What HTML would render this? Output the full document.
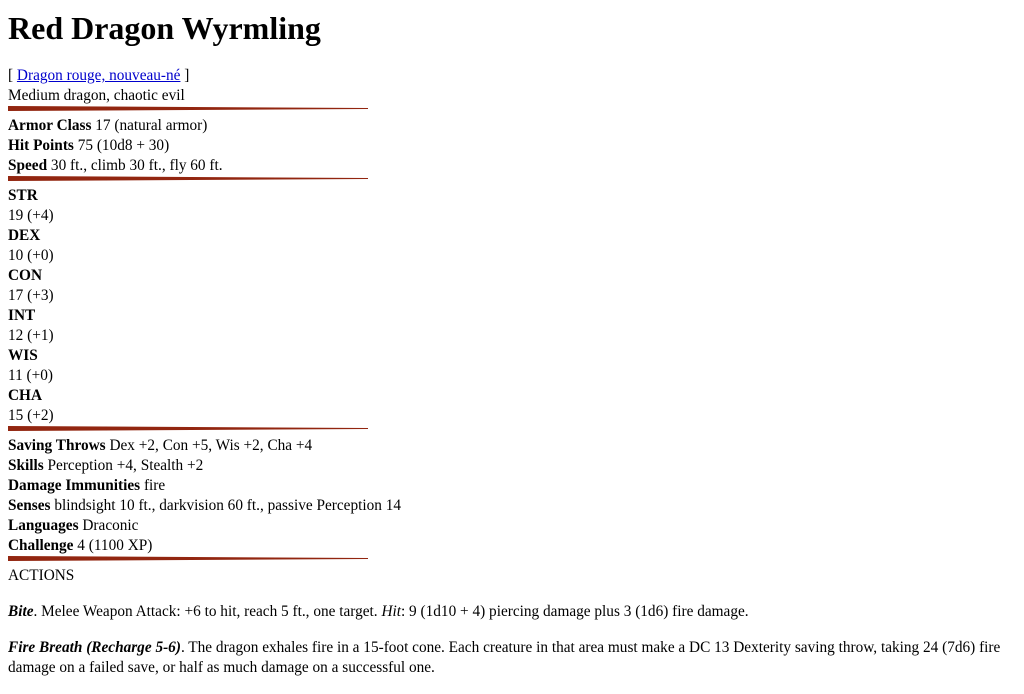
<!DOCTYPE html>
<html><head><meta charset="utf-8"><style>
body{margin:0;padding:0 8px;font-family:"Liberation Serif",serif;font-size:15.3px;color:#000;background:#fff;width:1000px}
h1{font-size:32px;line-height:32px;margin:12px 0 22px 0;font-weight:bold}
.l{line-height:20px;height:20px;white-space:nowrap}
a{color:#0000cc;text-decoration:underline}
.bar{height:10px}
.bar svg{display:block}
p{margin:0;line-height:20px}
</style></head><body>
<h1>Red Dragon Wyrmling</h1>
<div class="l">[ <a>Dragon rouge, nouveau-né</a> ]</div>
<div class="l">Medium dragon, chaotic evil</div>
<div class="bar"><svg width="360" height="5"><polygon points="0,0 360,2 360,3 0,5" fill="#922610"/></svg></div>
<div class="l"><b>Armor Class</b> 17 (natural armor)</div>
<div class="l"><b>Hit Points</b> 75 (10d8 + 30)</div>
<div class="l"><b>Speed</b> 30 ft., climb 30 ft., fly 60 ft.</div>
<div class="bar"><svg width="360" height="5"><polygon points="0,0 360,2 360,3 0,5" fill="#922610"/></svg></div>
<div class="l"><b>STR</b></div><div class="l">19 (+4)</div>
<div class="l"><b>DEX</b></div><div class="l">10 (+0)</div>
<div class="l"><b>CON</b></div><div class="l">17 (+3)</div>
<div class="l"><b>INT</b></div><div class="l">12 (+1)</div>
<div class="l"><b>WIS</b></div><div class="l">11 (+0)</div>
<div class="l"><b>CHA</b></div><div class="l">15 (+2)</div>
<div class="bar"><svg width="360" height="5"><polygon points="0,0 360,2 360,3 0,5" fill="#922610"/></svg></div>
<div class="l"><b>Saving Throws</b> Dex +2, Con +5, Wis +2, Cha +4</div>
<div class="l"><b>Skills</b> Perception +4, Stealth +2</div>
<div class="l"><b>Damage Immunities</b> fire</div>
<div class="l"><b>Senses</b> blindsight 10 ft., darkvision 60 ft., passive Perception 14</div>
<div class="l"><b>Languages</b> Draconic</div>
<div class="l"><b>Challenge</b> 4 (1100 XP)</div>
<div class="bar"><svg width="360" height="5"><polygon points="0,0 360,2 360,3 0,5" fill="#922610"/></svg></div>
<div class="l">ACTIONS</div>
<p style="margin-top:16px"><b><i>Bite</i></b>. Melee Weapon Attack: +6 to hit, reach 5 ft., one target. <i>Hit</i>: 9 (1d10 + 4) piercing damage plus 3 (1d6) fire damage.</p>
<p style="margin-top:16px"><b><i>Fire Breath (Recharge 5-6)</i></b>. The dragon exhales fire in a 15-foot cone. Each creature in that area must make a DC 13 Dexterity saving throw, taking 24 (7d6) fire<br>damage on a failed save, or half as much damage on a successful one.</p>
</body></html>
